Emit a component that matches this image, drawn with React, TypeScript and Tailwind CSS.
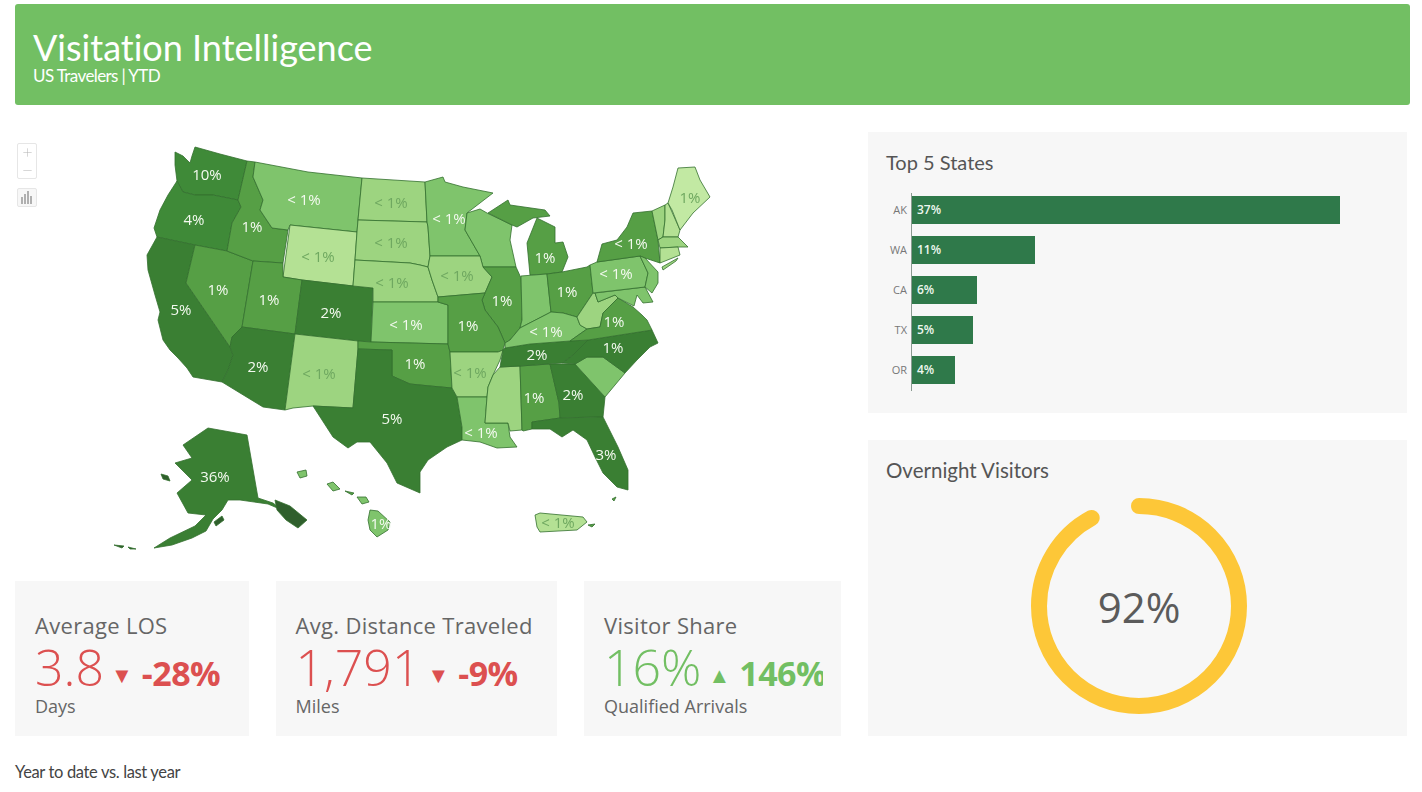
import { Plus, Minus } from 'lucide-react'

const c10 = '#3f8a38'
const dark = '#3a7f33'
const mid = '#569f45'
const lt1 = '#7fc46c'
const lt2 = '#9dd480'
const lt3 = '#b4e194'
const lt4 = '#c2e9a3'
const ink = '#2f5f2c'

const states: [string, string][] = [
  ['195,147 220,154 247,161 238,200 213,195 195,195 183,192 177,181 175,165 175,152 183,156 190,163 192,156', c10],
  ['183,192 195,195 213,195 238,200 241,207 232,223 227,251 195,245 157,237 154,228 160,210 168,195 177,181', c10],
  ['157,237 195,245 186,283 230,347 233,355 228,370 222,382 193,377 187,368 178,358 170,350 163,340 158,320 160,312 155,295 148,270 147,255', dark],
  ['195,245 227,251 253,261 242,327 232,337 230,347 186,283', mid],
  ['247,161 255,162 253,177 263,200 260,210 272,228 288,230 283,263 253,261 227,251 232,223 241,207 238,200', mid],
  ['255,162 308,172 362,178 358,220 357,232 290,225 288,230 272,228 260,210 263,200 253,177', lt1],
  ['290,225 357,232 355,260 353,286 302,280 283,277', lt3],
  ['253,261 283,263 283,277 302,280 295,334 242,327', mid],
  ['302,280 353,286 373,288 371,342 358,341 295,334', dark],
  ['242,327 295,334 285,410 263,407 222,382 228,370 233,355 230,347 232,337', dark],
  ['295,334 358,341 358,349 353,408 313,406 293,408 285,410', lt2],
  ['362,178 425,182 427,222 358,220', lt2],
  ['358,220 427,222 428,227 430,256 428,267 420,265 410,263 355,260 357,232', lt2],
  ['355,260 410,263 420,265 428,267 432,280 438,297 438,302 373,302 373,288 353,286', lt2],
  ['373,302 438,302 448,305 448,344 371,342', lt1],
  ['358,341 371,342 448,344 450,352 452,388 430,386 410,384 392,376 392,350 358,349', mid],
  ['358,349 392,350 392,376 410,384 430,386 452,388 457,397 462,427 462,440 447,447 428,460 420,472 420,493 397,483 387,463 370,442 357,442 348,448 333,437 313,406 353,408', dark],
  ['425,182 443,177 445,182 463,187 493,193 467,213 465,230 480,256 430,256 428,227 427,222', lt1],
  ['467,213 480,209 487,213 512,225 510,240 516,267 483,267 480,256 465,230', lt1],
  ['488,213 508,200 510,205 545,210 550,216 533,218 517,227 512,225', mid],
  ['530,275 527,243 537,218 555,227 555,243 563,242 568,257 562,272 547,274', mid],
  ['430,256 480,256 483,267 492,277 485,293 438,297 432,280 428,267', lt2],
  ['483,267 516,267 521,278 522,320 520,328 510,340 505,343 498,327 485,310 482,300 492,277', mid],
  ['521,276 547,274 551,312 520,328 522,320', lt1],
  ['547,274 562,272 587,267 590,265 593,293 577,317 563,313 551,312', mid],
  ['438,297 485,293 482,300 485,310 498,327 505,343 503,350 498,352 450,352 448,344 448,305 438,302', mid],
  ['450,352 498,352 503,350 500,360 493,375 488,387 487,397 457,397 452,388', lt2],
  ['457,397 487,397 485,423 508,423 510,437 517,447 497,448 480,442 462,440 462,427', lt1],
  ['488,387 493,375 500,367 520,366 522,430 510,431 508,423 485,423 487,397', lt2],
  ['520,366 550,364 559,403 560,418 532,422 532,429 523,431 522,430', mid],
  ['550,364 575,364 605,397 603,417 597,417 560,418 559,403', dark],
  ['532,422 560,418 597,417 603,417 618,447 628,470 628,490 617,487 603,473 595,457 587,440 573,430 562,437 550,429 532,429', dark],
  ['575,364 587,357 603,357 625,373 605,397', lt1],
  ['588,340 652,330 658,343 650,347 637,360 625,373 603,357 587,357 575,364 562,363 573,355', dark],
  ['505,348 530,344 570,341 588,340 573,355 562,363 520,366 500,367 503,350', dark],
  ['505,343 510,340 520,328 551,312 563,313 577,317 580,325 587,329 570,341 530,344 505,348', lt1],
  ['577,317 593,293 595,293 598,302 615,295 618,298 603,313 600,327 587,329 580,325', lt2],
  ['570,341 587,329 600,327 603,313 618,298 633,307 642,315 647,320 652,330 588,340', mid],
  ['612,291 645,287 653,302 643,303 637,295 634,306 618,298 615,295 598,302 595,293', lt1],
  ['590,265 597,262 640,256 648,273 645,287 593,293', lt1],
  ['597,262 602,244 617,240 627,227 633,213 652,211 658,240 660,263 645,258 640,256', mid],
  ['640,256 645,258 658,272 658,283 652,293 645,287 648,273', lt1],
  ['652,211 665,205 665,220 663,237 658,240', lt2],
  ['665,205 668,203 680,230 678,237 663,237 665,220', lt3],
  ['678,168 695,167 700,180 710,197 693,213 680,230 672,210 668,203 673,187', lt4],
  ['658,240 663,237 678,237 688,247 678,247 660,248', lt2],
  ['660,248 678,247 680,255 660,263', lt3],
  ['662,267 678,258 676,261 663,270', lt2],
  ['208,428 247,435 258,498 273,503 282,510 268,504 240,500 228,500 222,510 213,519 206,531 192,538 172,545 154,548 170,538 195,526 206,515 188,513 177,493 192,480 175,463 192,458 183,445', dark],
  ['275,500 290,506 307,520 298,528 286,520 277,510', ink],
  ['214,522 222,516 224,520 216,526', ink],
  ['161,474 168,476 170,481 163,479', ink],
  ['114,545 124,546 122,548', ink],
  ['128,547 136,549 130,549', ink],
  ['297,472 306,470 307,476 300,478', lt1],
  ['327,484 333,482 340,489 333,491', lt1],
  ['345,491 354,493 352,495', mid],
  ['357,497 366,497 369,502 362,504', lt1],
  ['370,510 378,511 390,522 388,530 377,537 370,530 368,520', lt1],
  ['535,515 540,513 583,517 587,522 577,530 540,532 537,527', lt3],
  ['588,525 595,524 592,527', mid],
  ['612,499 616,497 614,501', mid],
]

const white = '#f4faf0'
const dim = '#6fa860'
const labels: [string, number, number, string][] = [
  ['10%', 207, 174, white],
  ['4%', 194, 219, white],
  ['1%', 252, 226, white],
  ['< 1%', 304, 199, white],
  ['< 1%', 391, 202, dim],
  ['< 1%', 391, 242, dim],
  ['< 1%', 318, 256, dim],
  ['< 1%', 392, 282, dim],
  ['1%', 218, 289, white],
  ['1%', 269, 299, white],
  ['2%', 331, 312, white],
  ['< 1%', 406, 324, white],
  ['5%', 181, 309, white],
  ['2%', 258, 366, white],
  ['< 1%', 319, 373, dim],
  ['1%', 415, 363, white],
  ['5%', 392, 418, white],
  ['36%', 215, 476, white],
  ['< 1%', 449, 218, white],
  ['< 1%', 457, 275, dim],
  ['1%', 545, 257, white],
  ['1%', 502, 300, white],
  ['1%', 567, 291, white],
  ['1%', 468, 325, white],
  ['< 1%', 616, 273, white],
  ['< 1%', 631, 243, white],
  ['1%', 614, 321, white],
  ['< 1%', 546, 331, white],
  ['1%', 613, 347, white],
  ['2%', 537, 354, white],
  ['1%', 534, 397, white],
  ['2%', 573, 394, white],
  ['< 1%', 481, 432, white],
  ['< 1%', 470, 372, dim],
  ['3%', 606, 454, white],
  ['1%', 381, 523, white],
  ['< 1%', 558, 522, dim],
  ['1%', 690, 197, dim],
]

const bars = [
  { state: 'AK', label: '37%', width: 428 },
  { state: 'WA', label: '11%', width: 123 },
  { state: 'CA', label: '6%', width: 65 },
  { state: 'TX', label: '5%', width: 61 },
  { state: 'OR', label: '4%', width: 43 },
]

const UsMap = () => (
  <div className="relative h-[449px]">
    <svg viewBox="15 132 826 449" className="block w-[826px] h-[449px] blur-[0.4px]">
      {states.map(([points, fill], i) => (
        <polygon key={i} points={points} fill={fill} stroke="#33702f" strokeWidth="0.8" strokeLinejoin="round" />
      ))}
      {labels.map(([text, x, y, fill], i) => (
        <text
          key={i}
          x={x}
          y={y + 5.5}
          fill={fill}
          textAnchor="middle"
          fontSize="15"
          fontFamily="'Open Sans', sans-serif"
        >
          {text}
        </text>
      ))}
    </svg>
    <div className="absolute left-[2px] top-[11px] w-[20px] h-[36px] flex flex-col items-center justify-center border border-[#e6e6e6] rounded-[2px] text-[#b5b5b5] bg-white">
      <Plus size={13} strokeWidth={1} className="mb-[5px]" />
      <Minus size={13} strokeWidth={1} />
    </div>
    <div className="absolute left-[2px] top-[56px] w-[20px] h-[19px] flex items-center justify-center border border-[#e6e6e6] rounded-[2px] bg-[#f7f7f7]">
      <svg width="12" height="13" viewBox="0 0 12 13" fill="#b0b0b0">
        <rect x="0" y="6" width="2" height="7" />
        <rect x="3" y="3" width="2" height="10" />
        <rect x="6" y="0" width="2" height="13" />
        <rect x="9" y="5" width="2" height="8" />
      </svg>
    </div>
  </div>
)

const Stat = ({
  title,
  value,
  change,
  unit,
  up,
  width,
}: {
  title: string
  value: string
  change: string
  unit: string
  up?: boolean
  width: string
}) => (
  <div className={`${width} h-[155px] bg-[#f7f7f7] pl-[20px] pr-[18px] pt-[31px] font-['Open_Sans',sans-serif]`}>
    <div className="text-[22px] leading-[27px] tracking-[0.3px] text-[#666666] whitespace-nowrap">{title}</div>
    <div className={`flex items-baseline h-[56px] whitespace-nowrap ${up ? 'overflow-x-clip text-[#72bf63]' : 'text-[#dc5050]'}`}>
      <span className="text-[50px] leading-[56px] font-light">{value}</span>
      <span className="text-[22px] leading-[56px] ml-[7px] mr-[9px] -translate-y-[3px]">{up ? '▲' : '▼'}</span>
      <span className="text-[34px] leading-[56px] font-bold tracking-[-0.5px]">{change}</span>
    </div>
    <div className="text-[18px] leading-[22px] text-[#666666] whitespace-nowrap">{unit}</div>
  </div>
)

const App = () => {
  return (
    <div className="w-[1422px] h-[792px] overflow-hidden bg-white pt-[4px] px-[15px] font-['Lato',sans-serif] [font-variant-ligatures:none]">
      <header className="h-[101px] w-[1395px] rounded-[3px] bg-[#72bf63] pl-[18px] pt-[22px] text-white">
        <h1 className="text-[36px] leading-[42px]">Visitation Intelligence</h1>
        <p className="text-[17px] leading-[16px] tracking-[-0.6px]">US Travelers | YTD</p>
      </header>

      <div className="flex gap-[27px] mt-[27px]">
        <div className="w-[826px]">
          <UsMap />
          <div className="flex gap-[27px]">
            <Stat width="w-[234px]" title="Average LOS" value="3.8" change="-28%" unit="Days" />
            <Stat width="w-[282px]" title="Avg. Distance Traveled" value="1,791" change="-9%" unit="Miles" />
            <Stat width="w-[257px]" title="Visitor Share" value="16%" change="146%" unit="Qualified Arrivals" up />
          </div>
        </div>

        <div className="w-[541px] flex flex-col gap-[27px]">
          <section className="h-[281px] bg-[#f7f7f7] pl-[18px] pt-[17px]">
            <h2 className="text-[20px] leading-[26px] text-[#555555]">Top 5 States</h2>
            <div className="mt-[18px] ml-[25px] pt-[3px] pb-[7px] border-l border-[#8a9a90] flex flex-col gap-[12px] font-['Open_Sans',sans-serif] w-fit">
              {bars.map((bar) => (
                <div key={bar.state} className="relative h-[28px] flex items-center">
                  <span className="absolute left-[-26px] w-[21px] text-right text-[11px] text-[#777777]">{bar.state}</span>
                  <div
                    className="h-full bg-[#2f794a] flex items-center pl-[5px] text-[12px] font-semibold text-[#eef7ee]"
                    style={{ width: bar.width }}
                  >
                    {bar.label}
                  </div>
                </div>
              ))}
            </div>
          </section>

          <section className="h-[296px] bg-[#f7f7f7] pl-[18px] pt-[17px] relative">
            <h2 className="text-[20.5px] leading-[26px] text-[#555555]">Overnight Visitors</h2>
            <div className="absolute left-[162px] top-[57px] w-[218px] h-[218px] flex items-center justify-center">
              <svg viewBox="0 0 218 218" className="absolute inset-0">
                <circle
                  cx="109"
                  cy="109"
                  r="100"
                  fill="none"
                  stroke="#fdc738"
                  strokeWidth="16"
                  strokeLinecap="round"
                  strokeDasharray="578 628.3"
                  transform="rotate(-90 109 109)"
                />
              </svg>
              <span className="text-[42px] text-[#5b5b5b] font-['Open_Sans',sans-serif]">92%</span>
            </div>
          </section>
        </div>
      </div>

      <p className="mt-[27px] text-[16.5px] leading-[18px] text-[#444444] tracking-[-0.35px]">Year to date vs. last year</p>
    </div>
  )
}

export default App
